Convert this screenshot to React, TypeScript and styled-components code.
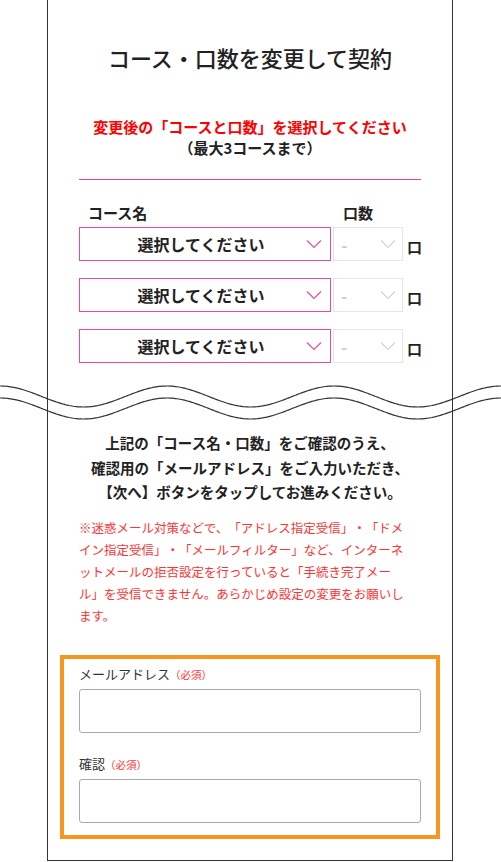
import React from "react"
import styled, { createGlobalStyle } from "styled-components"

const GlobalStyle = createGlobalStyle`
  body {
    margin: 0;
    background: #fff;
    font-family: "Noto Sans CJK JP", "Noto Sans", sans-serif;
    color: #222;
    text-spacing-trim: space-all;
  }
`

const Frame = styled.div`
  box-sizing: border-box;
  width: 406px;
  margin-left: 47px;
  border: 1px solid #333;
  border-top: none;
  padding: 0 31px 21px;
`

const Title = styled.h1`
  margin: 0;
  padding-top: 41px;
  font-size: 22px;
  line-height: 32px;
  font-weight: 500;
  text-align: center;
  color: #222;
`

const Lead = styled.p`
  margin: 43px 0 0;
  font-size: 15px;
  line-height: 21px;
  font-weight: 700;
  text-align: center;
  color: #222;
`

const Red = styled.span`
  color: #ff0000;
`

const Divider = styled.hr`
  margin: 21px 0 0;
  border: none;
  height: 1px;
  background: #ee3d96;
`

const Grid = styled.div`
  display: grid;
  grid-template-columns: 252px 70px 1fr;
  column-gap: 2px;
`

const Labels = styled(Grid)`
  margin-top: 23px;
  margin-bottom: 4px;
`

const ColLabel = styled.div<{ $inset: number }>`
  padding-left: ${(p) => p.$inset}px;
  font-size: 15px;
  line-height: 20px;
  font-weight: 700;
  color: #222;
`

const Row = styled(Grid)`
  align-items: end;
  & + & {
    margin-top: 17px;
  }
`

const SelectBox = styled.div<{ $active?: boolean }>`
  position: relative;
  box-sizing: border-box;
  height: 34px;
  border: 1px solid ${(p) => (p.$active ? "#e94b9c" : "#e6e6e6")};
  background: #fff;
`

const NativeSelect = styled.select<{ $active?: boolean }>`
  appearance: none;
  width: 100%;
  height: 100%;
  border: none;
  outline: none;
  background: transparent;
  font-family: inherit;
  font-size: ${(p) => (p.$active ? "16px" : "17px")};
  font-weight: 700;
  color: ${(p) => (p.$active ? "#222" : "#ccc")};
  text-align-last: ${(p) => (p.$active ? "center" : "left")};
  padding: ${(p) => (p.$active ? "0 28px 0 20px" : "0 0 0 7px")};
`

const Chevron = styled.svg<{ $right: number }>`
  position: absolute;
  top: 50%;
  right: ${(p) => p.$right}px;
  transform: translateY(-50%);
  pointer-events: none;
`

const Unit = styled.span`
  margin-left: 2px;
  margin-bottom: 4px;
  font-size: 15px;
  line-height: 20px;
  font-weight: 700;
  color: #222;
`

const Wave = styled.svg`
  display: block;
  margin: 17px 0 0 -79px;
`

const Guide = styled.p`
  margin: 7px 0 0;
  font-size: 14.5px;
  line-height: 24.5px;
  font-weight: 700;
  text-align: center;
  color: #222;
`

const Notice = styled.p`
  margin: 12px 0 0;
  max-width: 330px;
  font-size: 12.5px;
  line-height: 22px;
  color: #f33;
`

const FormBox = styled.div`
  margin: 28px -19px 0;
  border: 4px solid #f7961f;
  padding: 5px 15px 12px;
`

const Field = styled.div`
  & + & {
    margin-top: 21px;
  }
`

const FieldLabel = styled.label`
  display: flex;
  align-items: baseline;
  height: 20px;
  font-size: 13px;
  line-height: 20px;
  color: #333;
`

const Required = styled.span`
  font-size: 10.5px;
  line-height: 20px;
  color: #f33;
`

const TextInput = styled.input`
  display: block;
  box-sizing: border-box;
  width: 100%;
  height: 44px;
  margin-top: 5px;
  border: 1px solid #aaa;
  border-radius: 3px;
  outline: none;
  font-family: inherit;
  font-size: 14px;
  padding: 0 10px;
`

const wavePath = (offset: number) => {
  const pts: string[] = []
  for (let x = 0; x <= 501; x += 1.5) {
    const y = 16.5 + offset - 10.5 * Math.cos((2 * Math.PI * x) / 167)
    pts.push(`${x.toFixed(1)},${y.toFixed(2)}`)
  }
  return "M" + pts.join(" L")
}

const ChevronIcon = ({ color, right, w }: { color: string; right: number; w: number }) => (
  <Chevron $right={right} width={w} height={9} viewBox={`0 0 ${w} 9`}>
    <polyline points={`1,1 ${w / 2},8 ${w - 1},1`} fill="none" stroke={color} strokeWidth={1.1} />
  </Chevron>
)

const CourseRow = () => (
  <Row>
    <SelectBox $active>
      <NativeSelect $active defaultValue="">
        <option value="">選択してください</option>
      </NativeSelect>
      <ChevronIcon color="#e94b9c" right={8} w={16} />
    </SelectBox>
    <SelectBox>
      <NativeSelect defaultValue="">
        <option value="">-</option>
      </NativeSelect>
      <ChevronIcon color="#d4d4d4" right={6} w={16} />
    </SelectBox>
    <Unit>口</Unit>
  </Row>
)

export default function App() {
  return (
    <>
      <GlobalStyle />
      <Frame>
        <Title>コース・口数を変更して契約</Title>
        <Lead>
          <Red>変更後の「コースと口数」を選択してください</Red>
          <br />
          （最大3コースまで）
        </Lead>
        <Divider />
        <Labels>
          <ColLabel $inset={9}>コース名</ColLabel>
          <ColLabel $inset={10}>口数</ColLabel>
        </Labels>
        <CourseRow />
        <CourseRow />
        <CourseRow />
        <Wave width={501} height={44} viewBox="0 0 501 44">
          <path d={wavePath(0)} fill="none" stroke="#333" strokeWidth={1.2} />
          <path d={wavePath(12)} fill="none" stroke="#333" strokeWidth={1.2} />
        </Wave>
        <Guide>
          上記の「コース名・口数」をご確認のうえ、
          <br />
          確認用の「メールアドレス」をご入力いただき、
          <br />
          【次へ】ボタンをタップしてお進みください。
        </Guide>
        <Notice>
          ※迷惑メール対策などで、「アドレス指定受信」・「ドメイン指定受信」・「メールフィルター」など、インターネットメールの拒否設定を行っていると「手続き完了メール」を受信できません。あらかじめ設定の変更をお願いします。
        </Notice>
        <FormBox>
          <Field>
            <FieldLabel>
              メールアドレス<Required>（必須）</Required>
            </FieldLabel>
            <TextInput type="email" />
          </Field>
          <Field>
            <FieldLabel>
              確認<Required>（必須）</Required>
            </FieldLabel>
            <TextInput type="email" />
          </Field>
        </FormBox>
      </Frame>
    </>
  )
}
